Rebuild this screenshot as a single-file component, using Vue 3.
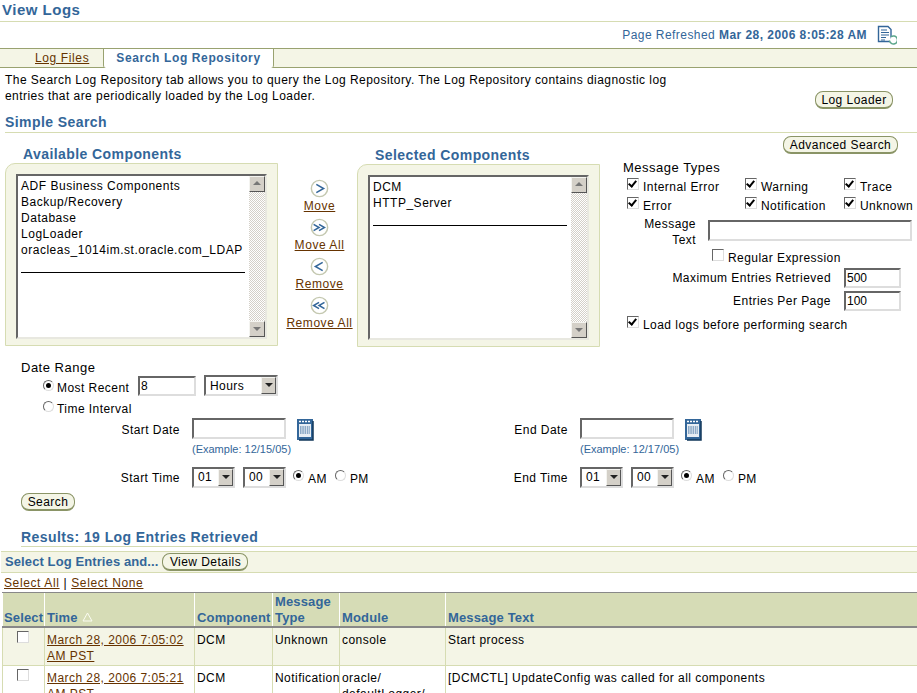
<script setup>
const available = ['ADF Business Components', 'Backup/Recovery', 'Database', 'LogLoader', 'oracleas_1014im.st.oracle.com_LDAP']
const selected = ['DCM', 'HTTP_Server']
const shuttle = [
  { label: 'Move', path: 'M7 6 L15 10.5 L7 15' },
  { label: 'Move All', path: 'M4 7 L10 10.5 L4 14 M10 7 L16 10.5 L10 14' },
  { label: 'Remove', path: 'M14 6 L6 10.5 L14 15' },
  { label: 'Remove All', path: 'M10 7 L4 10.5 L10 14 M16 7 L10 10.5 L16 14' }
]
const ranges = [
  { date: 'Start Date', time: 'Start Time', example: '(Example: 12/15/05)' },
  { date: 'End Date', time: 'End Time', example: '(Example: 12/17/05)' }
]
</script>

<template>
  <div class="page">
    <h1 class="title">View Logs</h1>
    <div class="refresh">
      <span>Page Refreshed <b>Mar 28, 2006 8:05:28 AM</b></span>
      <svg class="refresh-icon" width="20" height="20" viewBox="0 0 20 20">
        <path d="M1.5 1.5H11L14 4.5V16.5H1.5Z" fill="#fff" stroke="#336699" stroke-width="1.4" />
        <path d="M4 5H10M4 7.5H12M4 10H12M4 12.500H9M4 15H8" stroke="#336699" stroke-width="1.2" />
        <path d="M12.500 15.500A4 4 0 1 0 14 11.800" fill="#fff" stroke="#5aa68a" stroke-width="1.5" />
      </svg>
    </div>

    <div class="tabs">
      <a class="tab link">Log Files</a>
      <span class="tab active">Search Log Repository</span>
    </div>

    <div class="intro">
      <p>The Search Log Repository tab allows you to query the Log Repository. The Log Repository contains diagnostic log entries that are periodically loaded by the Log Loader.</p>
      <button class="btn loader">Log Loader</button>
    </div>

    <h2 class="section">Simple Search</h2>

    <div class="search">
      <div class="col-left">
        <h3>Available Components</h3>
        <div class="panel">
          <div class="listbox">
            <div class="items">
              <div v-for="c in available" :key="c">{{ c }}</div>
              <div class="rule"></div>
            </div>
            <div class="scroll">
              <span class="sb up"></span>
              <span class="sb down"></span>
            </div>
          </div>
        </div>
      </div>

      <div class="shuttle">
        <div v-for="s in shuttle" :key="s.label" class="shuttle-item">
          <svg width="19" height="19" viewBox="0 0 21 21">
            <circle cx="10.500" cy="10.500" r="9" fill="#fff" stroke="#c4c8b0" stroke-width="1.600" />
            <path :d="s.path" fill="none" stroke="#336699" stroke-width="1.700" />
          </svg>
          <a class="link">{{ s.label }}</a>
        </div>
      </div>

      <div class="col-mid">
        <h3>Selected Components</h3>
        <div class="panel">
          <div class="listbox">
            <div class="items">
              <div v-for="c in selected" :key="c">{{ c }}</div>
              <div class="rule"></div>
            </div>
            <div class="scroll">
              <span class="sb up"></span>
              <span class="sb down"></span>
            </div>
          </div>
        </div>
      </div>

      <div class="col-right">
        <button class="btn advanced">Advanced Search</button>
        <div class="mt-title">Message Types</div>
        <div class="mt-grid">
          <label class="opt"><span class="cb on"></span>Internal Error</label>
          <label class="opt"><span class="cb on"></span>Warning</label>
          <label class="opt"><span class="cb on"></span>Trace</label>
          <label class="opt"><span class="cb on"></span>Error</label>
          <label class="opt"><span class="cb on"></span>Notification</label>
          <label class="opt"><span class="cb on"></span>Unknown</label>
        </div>
        <div class="msg-row">
          <span class="msg-label">Message Text</span>
          <span class="input msg-input"></span>
        </div>
        <label class="opt regex"><span class="cb"></span>Regular Expression</label>
        <div class="num-row"><span>Maximum Entries Retrieved</span><span class="input num">500</span></div>
        <div class="num-row"><span>Entries Per Page</span><span class="input num">100</span></div>
        <label class="opt load"><span class="cb on"></span>Load logs before performing search</label>
      </div>
    </div>

    <div class="dates">
      <div class="date-title">Date Range</div>
      <div class="recent">
        <span class="radio on"></span><span class="recent-label">Most Recent</span>
        <span class="input recent-input">8</span>
        <span class="select hours"><span class="sel-text">Hours</span><span class="sb down"></span></span>
      </div>
      <div class="interval"><span class="radio"></span><span>Time Interval</span></div>
      <div class="range-row">
        <div v-for="r in ranges" :key="r.date" class="range">
          <div class="range-date">
            <span class="range-label">{{ r.date }}</span>
            <span class="input date-input"></span>
            <svg class="cal" width="18" height="23" viewBox="0 0 18 23">
              <rect x="1" y="1" width="16" height="21" fill="#336699" />
              <rect x="3" y="6" width="12" height="13" fill="#e8eef4" />
              <path d="M3 3.500H15" stroke="#fff" stroke-width="1.500" stroke-dasharray="2 1" />
              <path d="M4 9H14M4 11H14M4 13H14M4 15H14" stroke="#336699" stroke-width="1.200" stroke-dasharray="1.500 .8" />
              <path d="M17 3V22H3" fill="none" stroke="#12375a" stroke-width="1.500" />
            </svg>
          </div>
          <div class="example">{{ r.example }}</div>
          <div class="range-time">
            <span class="range-label">{{ r.time }}</span>
            <span class="select time"><span class="sel-text">01</span><span class="sb down"></span></span>
            <span class="select time"><span class="sel-text">00</span><span class="sb down"></span></span>
            <span class="radio on ampm"></span><span class="ampm-text">AM</span>
            <span class="radio ampm2"></span><span class="ampm-text">PM</span>
          </div>
        </div>
      </div>
      <button class="btn go">Search</button>
    </div>

    <h2 class="section results">Results: 19 Log Entries Retrieved</h2>

    <div class="action-bar">
      <b>Select Log Entries and...</b>
      <button class="btn details">View Details</button>
    </div>
    <div class="select-links"><a class="link">Select All</a> | <a class="link">Select None</a></div>

    <table class="grid">
      <colgroup>
        <col class="c1" /><col class="c2" /><col class="c3" /><col class="c4" /><col class="c5" /><col />
      </colgroup>
      <thead>
        <tr>
          <th>Select</th>
          <th>Time <svg class="sort" width="11" height="10" viewBox="0 0 11 10"><path d="M5.500 1L10 9H1Z" fill="none" stroke="#fbfcf2" /></svg></th>
          <th>Component</th>
          <th>Message Type</th>
          <th>Module</th>
          <th>Message Text</th>
        </tr>
      </thead>
      <tbody>
        <tr class="odd">
          <td class="cbcell"><span class="cb"></span></td>
          <td><a class="link">March 28, 2006 7:05:02 AM PST</a></td>
          <td>DCM</td>
          <td>Unknown</td>
          <td>console</td>
          <td>Start process</td>
        </tr>
        <tr>
          <td class="cbcell"><span class="cb"></span></td>
          <td><a class="link">March 28, 2006 7:05:21 AM PST</a></td>
          <td>DCM</td>
          <td>Notification</td>
          <td>oracle/ defaultLogger/ dcm</td>
          <td>[DCMCTL] UpdateConfig was called for all components</td>
        </tr>
      </tbody>
    </table>
  </div>
</template>

<style scoped>
.page {
  width: 917px;
  height: 693px;
  overflow: hidden;
  font-family: "Liberation Sans", Arial, sans-serif;
  font-size: 12px;
  letter-spacing: 0.45px;
  line-height: 16px;
  color: #000;
  background: #fff;
}
h1, h2, h3, p { margin: 0; }
.title {
  height: 21px;
  padding-left: 2px;
  font-size: 15px;
  line-height: 20px;
  letter-spacing: 0.5px;
  color: #336699;
  border-bottom: 1px solid #d6dcb2;
}
.refresh {
  height: 26px;
  padding-right: 20px;
  display: flex;
  justify-content: flex-end;
  align-items: center;
  gap: 10px;
  color: #336699;
}
.tabs {
  height: 18px;
  display: flex;
  background: #f4f5e6;
  border-top: 1px solid #99a270;
  border-bottom: 1px solid #99a270;
  letter-spacing: 0.62px;
}
.tab { line-height: 18px; }
.tabs .link { margin-left: 35px; width: 68px; }
.active {
  width: 171px;
  height: 19px;
  box-sizing: border-box;
  text-align: center;
  font-weight: bold;
  color: #336699;
  background: #fff;
  border-left: 1px solid #99a270;
  border-right: 1px solid #99a270;
  border-bottom-left-radius: 3px;
  border-bottom-right-radius: 3px;
}
.link { color: #663300; text-decoration: underline; }
.intro {
  box-sizing: border-box;
  display: flex;
  justify-content: space-between;
  align-items: flex-end;
  padding: 4px 24px 0 5px;
  height: 41px;
}
.intro p { width: 680px; align-self: flex-start; }
.btn {
  font: inherit;
  letter-spacing: inherit;
  padding: 0;
  height: 18px;
  line-height: 14px;
  color: #000;
  background: #f4f5e6;
  border: 1px solid #8a9466;
  border-bottom-width: 2px;
  border-radius: 8px;
}
.loader { width: 78px; }
.section {
  margin: 5px 0 0 5px;
  height: 18px;
  font-size: 14px;
  line-height: 16px;
  letter-spacing: 0.42px;
  color: #336699;
  border-bottom: 1px solid #d6dcb2;
}
.search { display: flex; height: 228px; }
.col-left { width: 273px; margin-left: 5px; }
.col-mid { width: 243px; padding-top: 1px; }
h3 {
  margin: 13px 0 0 18px;
  height: 17px;
  font-size: 14px;
  line-height: 16px;
  letter-spacing: 0.42px;
  color: #336699;
}
.panel {
  height: 183px;
  box-sizing: border-box;
  padding: 10px 10px 6px 10px;
  background: #f4f5e6;
  border: 1px solid #d6dcb2;
  border-top-left-radius: 10px;
}
.listbox {
  height: 100%;
  box-sizing: border-box;
  display: flex;
  background: #fff;
  border: 2px solid;
  border-color: #666 #e8e8e0 #e8e8e0 #666;
}
.items { flex: 1; padding: 2px 3px; overflow: hidden; line-height: 16px; letter-spacing: 0.52px; }
.rule { height: 1px; background: #000; margin: 14px 1px 0 0; }
.scroll {
  width: 16px;
  display: flex;
  flex-direction: column;
  justify-content: space-between;
  background: repeating-conic-gradient(#d4d0c8 0 25%, #fff 0 50%) 0 0 / 2px 2px;
}
.sb {
  position: relative;
  display: block;
  width: 16px;
  height: 16px;
  box-sizing: border-box;
  background: #d4d0c8;
  border: 1px solid;
  border-color: #f4f4f0 #555 #555 #f4f4f0;
}
.sb::after {
  content: "";
  position: absolute;
  left: 3px;
  width: 0;
  height: 0;
  border-left: 4px solid transparent;
  border-right: 4px solid transparent;
}
.up::after { top: 4px; border-bottom: 4px solid #777; }
.down::after { top: 5px; border-top: 4px solid #222; }
.scroll .down::after { border-top-color: #777; }
.shuttle {
  width: 79px;
  padding: 46px 0 0 4px;
  display: flex;
  flex-direction: column;
  align-items: center;
  box-sizing: border-box;
  letter-spacing: 0.55px;
}
.shuttle-item {
  height: 39px;
  display: flex;
  flex-direction: column;
  align-items: center;
  line-height: 16px;
  white-space: nowrap;
}
.shuttle-item svg { display: block; }
.col-right { position: relative; flex: 1; padding: 27px 0 0 23px; }
.advanced {
  position: absolute;
  top: 3px;
  right: 19px;
  width: 115px;
}
.mt-title { height: 16px; line-height: 16px; font-size: 13px; letter-spacing: 0.5px; }
.mt-grid {
  display: grid;
  grid-template-columns: 118px 99px auto;
  grid-auto-rows: 19px;
  margin: 0 0 0 4px;
  width: 290px;
}
.opt {
  display: flex;
  align-items: flex-end;
  white-space: nowrap;
}
.cb {
  position: relative;
  display: inline-block;
  flex: none;
  width: 12px;
  height: 12px;
  box-sizing: border-box;
  margin: 0 4px 5px 0;
  background: #fff;
  border: 1px solid;
  border-color: #666 #ddd #ddd #666;
}
.cb.on::after {
  content: "";
  position: absolute;
  left: 2px;
  top: 0;
  width: 3px;
  height: 6px;
  border: solid #000;
  border-width: 0 2px 2px 0;
  transform: rotate(40deg);
}
.msg-row { display: flex; align-items: center; gap: 12px; height: 33px; }
.msg-label { width: 73px; margin-top: 3px; text-align: right; line-height: 16px; }
.input {
  display: block;
  box-sizing: border-box;
  background: #fff;
  border: 2px solid;
  border-color: #666 #ddd #ddd #666;
  line-height: 16px;
  padding-left: 1px;
  letter-spacing: 0;
}
.msg-input { width: 204px; height: 21px; }
.regex { margin: 0 0 0 89px; height: 19px; }
.num-row {
  display: flex;
  justify-content: flex-end;
  align-items: center;
  gap: 13px;
  width: 278px;
  height: 23px;
}
.num { width: 57px; height: 20px; }
.load { margin: 2px 0 0 4px; height: 19px; }

.dates { position: relative; }
.date-title { margin: -1px 0 0 21px; height: 17px; line-height: 16px; font-size: 13px; letter-spacing: 0.5px; }
.recent, .interval { display: flex; align-items: center; margin-left: 43px; }
.recent { height: 21px; }
.interval { height: 22px; }
.radio {
  position: relative;
  display: inline-block;
  flex: none;
  width: 11px;
  height: 11px;
  box-sizing: border-box;
  margin: -5px 3px 0 0;
  background: #fff;
  border: 1px solid;
  border-color: #666 #ddd #ddd #666;
  border-radius: 50%;
}
.radio.on::after {
  content: "";
  position: absolute;
  left: 2px;
  top: 2px;
  width: 5px;
  height: 5px;
  background: #000;
  border-radius: 50%;
}
.recent-label { width: 81px; }
.recent-input { width: 58px; height: 20px; margin: 0 8px 4px 0; }
.select {
  display: flex;
  align-items: center;
  justify-content: space-between;
  box-sizing: border-box;
  height: 21px;
  background: #fff;
  border: 2px solid;
  border-color: #666 #ddd #ddd #666;
}
.sel-text { padding-left: 4px; }
.hours { width: 74px; margin-bottom: 4px; }
.time { width: 43px; margin: 0 8px 2px 0; }
.select .sb { width: 15px; height: 17px; }
.range-row { display: flex; margin-top: -1px; }
.range { width: 388px; }
.range-date, .range-time { display: flex; align-items: center; }
.range-date { height: 22px; }
.range-label { width: 180px; padding-right: 12px; text-align: right; }
.date-input { width: 94px; height: 21px; margin-bottom: 4px; }
.cal { margin: 0 0 2px 10px; }
.example {
  margin: 1px 0 0 192px;
  height: 25px;
  font-size: 11px;
  line-height: 14px;
  letter-spacing: 0;
  color: #336699;
}
.range-time { height: 22px; }
.ampm { margin: -5px 4px 0 -1px; }
.ampm2 { margin: -5px 4px 0 8px; }
.ampm-text { position: relative; top: 1px; }
.go { width: 54px; margin: 4px 0 0 21px; display: block; }
.section.results { margin: 18px 0 0 21px; height: 17px; }
.action-bar {
  display: flex;
  align-items: center;
  gap: 4px;
  height: 20px;
  margin: 4px 0 0 1px;
  padding-left: 4px;
  background: #f4f5e6;
  border-top: 1px solid #d6dcb2;
  border-bottom: 1px solid #d6dcb2;
  color: #336699;
}
.action-bar b { font-size: 13px; letter-spacing: 0.1px; }
.details { width: 86px; }
.select-links { margin-left: 4px; height: 19px; line-height: 20px; letter-spacing: 0.62px; }
.grid {
  width: 917px;
  margin-left: 2px;
  table-layout: fixed;
  border-collapse: collapse;
}
.c1 { width: 42px; }
.c2 { width: 150px; }
.c3 { width: 78px; }
.c4 { width: 67px; }
.c5 { width: 106px; }
th {
  padding: 0 1px 0 1px;
  vertical-align: bottom;
  text-align: left;
  font-size: 13px;
  letter-spacing: 0.15px;
  line-height: 16px;
  color: #336699;
  background: #d6dcb6;
  border-top: 1px solid #888;
  border-bottom: 2px solid #888;
  border-left: 1px solid #fff;
  height: 33px;
}
th + th { padding-left: 2px; }
td {
  padding: 4px 1px 1px 2px;
  vertical-align: top;
  line-height: 16px;
  border-left: 1px solid #d6dcb2;
  border-bottom: 1px solid #d6dcb2;
  height: 32px;
}
.odd td { background: #f4f5e6; }
.cbcell { text-align: center; padding: 3px 2px 1px 1px; }
.cbcell .cb { margin: 0; }
.sort { margin-left: 1px; }
</style>

<style>
html, body { margin: 0; overflow: hidden; }
</style>
